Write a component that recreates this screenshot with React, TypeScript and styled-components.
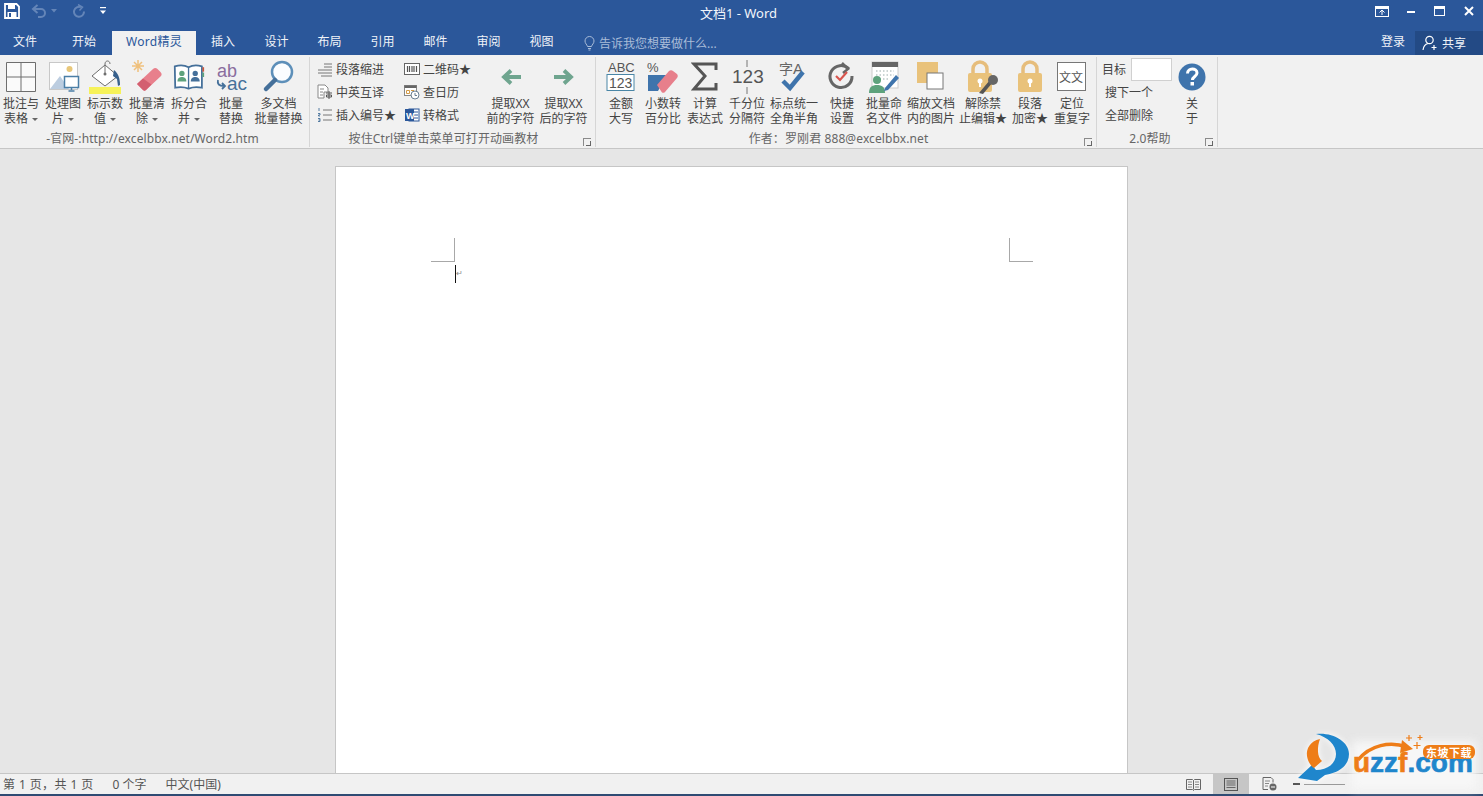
import React from "react";
import styled, { createGlobalStyle } from "styled-components";

const FONT = `"Noto Sans", "Noto Sans CJK SC", sans-serif`;

const Global = createGlobalStyle`
  html, body { margin: 0; padding: 0; height: 100%; overflow: hidden; }
  body { font-family: ${FONT}; font-size: 12px; color: #444; background: #e6e6e6; }
  * { box-sizing: border-box; }
`;

const Shell = styled.div`
  width: 1483px; height: 796px; display: flex; flex-direction: column; overflow: hidden; position: relative;
`;
const TitleBar = styled.div`
  height: 31px; flex: none; background: #2b579a; color: #fff;
  display: grid; grid-template-columns: 1fr auto 1fr; align-items: start;
`;
const Quick = styled.div`display: flex; align-items: center; height: 22px; padding-left: 3px;`;
const QuickBtn = styled.div<{ $w: number }>`
  width: ${p => p.$w}px; height: 20px; display: flex; align-items: center; justify-content: center;
`;
const Title = styled.div`font-size: 13px; line-height: 27px; color: #f2f5fa; padding-right: 6px;`;
const WinControls = styled.div`display: flex; justify-content: flex-end; height: 22px; padding-right: 0;`;
const WinBtn = styled.div`
  width: 29px; height: 22px; display: flex; align-items: center; justify-content: center;
`;
const TabBar = styled.div`
  height: 24px; flex: none; background: #2b579a; display: flex; align-items: stretch; color: #fff;
`;
const Tab = styled.div<{ $w: number; $active?: boolean; $pr?: number }>`
  width: ${p => p.$w}px; padding-right: ${p => p.$pr || 0}px; text-align: center; line-height: 22px; font-size: 12px;
  background: ${p => (p.$active ? "#f1f1f1" : "transparent")};
  color: ${p => (p.$active ? "#2b579a" : "#f0f3f8")};
  letter-spacing: ${p => (p.$active ? "0.3px" : "0")};
`;
const TellMe = styled.div`
  display: flex; align-items: center; gap: 4px; margin-left: 16px; color: #a9bcd8; height: 24px; font-size: 12px;
`;
const Spacer = styled.div`flex: 1;`;
const Login = styled.div`line-height: 22px; width: 44px; text-align: center; color: #f0f3f8;`;
const Share = styled.div`
  width: 68px; background: #234a85; display: flex; align-items: center; gap: 3px; padding-left: 7px; color: #f0f3f8; height: 24px;
`;
const Ribbon = styled.div`
  height: 94px; flex: none; background: #f1f1f1; border-bottom: 1px solid #c6c6c6; display: flex; position: relative;
`;
const Group = styled.div<{ $w: number; $bare?: boolean }>`
  width: ${p => p.$w}px; height: 90px; margin-top: 2px; display: flex; flex-direction: column; position: relative;
  border-right: ${p => (p.$bare ? "none" : "1px solid #d6d6d6")};
`;
const GroupBody = styled.div<{ $pl?: number }>`
  flex: 1; display: flex; align-items: flex-start; padding-left: ${p => p.$pl || 0}px; min-height: 0;
`;
const GroupFoot = styled.div<{ $pr?: number }>`
  height: 16px; text-align: center; line-height: 15px; color: #666; font-size: 12px; flex: none; padding-right: ${p => p.$pr || 0}px;
  letter-spacing: 0.1px; white-space: nowrap;
`;
const Launcher = styled.span`
  position: absolute; right: 4px; bottom: 1px; width: 8px; height: 8px; border-left: 1px solid #8a8a8a; border-top: 1px solid #8a8a8a;
  &::after { content: ""; position: absolute; right: 0; bottom: 0; width: 4px; height: 4px; border-right: 1px solid #666; border-bottom: 1px solid #666; }
`;
const Large = styled.div<{ $w: number }>`
  width: ${p => p.$w}px; flex: none; display: flex; flex-direction: column; align-items: center;
`;
const LargeIcon = styled.div`
  height: 36px; width: 100%; margin-top: 2px; display: flex; align-items: center; justify-content: center;
`;
const LargeLabel = styled.div`
  text-align: center; font-size: 12px; line-height: 15px; color: #444; white-space: nowrap; margin-top: 1px;
`;
const Caret = styled.span`
  display: inline-block; width: 0; height: 0; margin-left: 4px; vertical-align: 2px;
  border-left: 3px solid transparent; border-right: 3px solid transparent; border-top: 3px solid #666;
`;
const SmallCol = styled.div<{ $w: number }>`
  width: ${p => p.$w}px; flex: none; display: flex; flex-direction: column;
`;
const SmallRow = styled.div`
  height: 23px; display: flex; align-items: center; gap: 3px; white-space: nowrap; color: #444;
`;
const SmallIcon = styled.span`width: 16px; height: 16px; flex: none; display: flex; align-items: center; justify-content: center;`;
const SearchCol = styled.div`
  width: 76px; flex: none; padding-left: 5px; display: flex; flex-direction: column;
`;
const TargetRow = styled.div`display: flex; align-items: center; gap: 5px; height: 24px; white-space: nowrap;`;
const TargetBox = styled.div`width: 41px; height: 23px; flex: none; background: #fff; border: 1px solid #d0d0d0;`;
const SearchRow = styled.div`height: 23px; line-height: 23px; padding-left: 3px; white-space: nowrap;`;

const Main = styled.div`
  flex: 1; min-height: 0; background: #e6e6e6; padding: 17px 20px 0 0; display: flex; justify-content: center; overflow: hidden;
`;
const Page = styled.div`
  width: 793px; height: 640px; background: #fff; border: 1px solid #c6c6c6; padding: 71px 94px 0 95px; flex: none;
`;
const Marks = styled.div`display: flex; justify-content: space-between;`;
const Mark = styled.div<{ $right?: boolean }>`
  width: 24px; height: 24px; border-bottom: 1px solid #a8a8a8;
  border-right: ${p => (p.$right ? "none" : "1px solid #a8a8a8")};
  border-left: ${p => (p.$right ? "1px solid #a8a8a8" : "none")};
`;
const CaretRow = styled.div`display: flex; margin: 3px 0 0 24px; align-items: center;`;
const TextCaret = styled.div`width: 1px; height: 18px; background: #111;`;
const ParaMark = styled.span`font-size: 8px; color: #8a8a8a; line-height: 10px; margin-top: -3px;`;

const Status = styled.div`
  height: 21px; flex: none; background: #f1f1f1; border-top: 1px solid #c6c6c6; display: flex; align-items: center; color: #555; font-size: 12px; position: relative;
`;
const StatusItem = styled.span<{ $ml: number; $ls?: number }>`
  margin-left: ${p => p.$ml}px; white-space: nowrap; letter-spacing: ${p => p.$ls || 0}px;
`;
const ViewGroup = styled.div`display: flex; align-items: stretch; gap: 2px; height: 20px; margin-right: 138px;`;
const ViewBtn = styled.div<{ $w: number; $active?: boolean }>`
  width: ${p => p.$w}px; display: flex; align-items: center; justify-content: center;
  background: ${p => (p.$active ? "#c6c6c6" : "transparent")};
`;
const ZoomBar = styled.div`width: 56px; display: flex; align-items: center; gap: 4px; padding-left: 4px;`;
const ZoomMinus = styled.span`width: 7px; height: 2px; background: #555; flex: none;`;
const ZoomTrack = styled.span`flex: 1; height: 1px; background: #999;`;
const BottomLine = styled.div`height: 2px; flex: none; background: #2f4b73;`;

const Logo = styled.div`
  position: absolute; left: 1298px; top: 733px; width: 183px; height: 58px;
`;
const LogoHalo = styled.div`
  position: absolute; left: 54px; top: 8px; width: 124px; height: 48px; background: #f7f7f7; filter: blur(5px);
`;
const LogoText = styled.div`
  position: absolute; left: 55px; top: 26px; font: 700 28px/8px "Liberation Sans", sans-serif; letter-spacing: 0; color: #1f86cc; white-space: nowrap;
  -webkit-text-stroke: 0.6px currentColor;
`;
const LogoOrange = styled.span`color: #ee7d18;`;
const LogoBadge = styled.div`
  position: absolute; left: 125px; top: 12px; width: 52px; height: 14px; border-radius: 6px; background: #ee7d18; color: #fff;
  font: 700 11px/14px "Noto Sans CJK SC", sans-serif; text-align: center; letter-spacing: 0.5px; white-space: nowrap;
`;
const LogoMark = styled.svg<{ $glow?: boolean }>`
  position: absolute; left: 0; top: 0; overflow: visible;
  filter: ${p => (p.$glow ? "drop-shadow(0 0 3px #fff)" : "none")};
`;

/* ---------- icons ---------- */
type SP = { w?: number; h?: number; vb?: string; children: React.ReactNode };
const S = ({ w = 36, h = 36, vb, children }: SP) => (
  <svg width={w} height={h} viewBox={vb || `0 0 ${w} ${h}`} fill="none" style={{ display: "block" }}>{children}</svg>
);
const SaveIcon = () => (
  <S w={16} h={16}>
    <path d="M1 1h11.5L15 3.5V15H1z" stroke="#fff" strokeWidth="1.8" />
    <rect x="4" y="1.5" width="7" height="4.5" fill="#fff" />
    <rect x="3.5" y="9" width="9" height="5.5" fill="#fff" />
    <rect x="5" y="10" width="2" height="4" fill="#2b579a" />
  </S>
);
const UndoIcon = () => (
  <S w={16} h={14}>
    <path d="M3 5h7a4 4 0 0 1 0 8H7" stroke="#6485b8" strokeWidth="2" />
    <path d="M6.5 1 2 5l4.500 4" stroke="#6485b8" strokeWidth="2" />
  </S>
);
const RedoIcon = () => (
  <S w={14} h={14}>
    <path d="M9 3.200A5 5 0 1 0 12 7.500" stroke="#6485b8" strokeWidth="2" />
    <path d="M6 .5l4.500 2.700L7.500 6.500" stroke="#6485b8" strokeWidth="1.500" />
  </S>
);
const QuickMore = () => (
  <S w={6} h={8}>
    <rect x="0" y="0" width="6" height="1.200" fill="#fff" />
    <path d="M0 3.500h6L3 7z" fill="#fff" />
  </S>
);
const SmallDrop = () => (<S w={6} h={4}><path d="M0 0h6L3 3.500z" fill="#6485b8" /></S>);
const RibbonDisplay = () => (
  <S w={14} h={11}>
    <rect x=".5" y=".5" width="13" height="10" stroke="#fff" />
    <rect x="1" y="1" width="12" height="2" fill="#fff" />
    <path d="M4.500 6.500 7 4l2.500 2.500M7 4.500V9" stroke="#fff" />
  </S>
);
const MinIcon = () => <S w={10} h={10}><rect x="1" y="5" width="8" height="2" fill="#fff" /></S>;
const MaxIcon = () => (
  <S w={11} h={10}><rect x=".5" y=".5" width="10" height="9" stroke="#fff" /><rect x="1" y="1" width="9" height="2" fill="#fff" /></S>
);
const CloseIcon = () => (
  <S w={10} h={10}><path d="M1 1l8 8M9 1l-8 8" stroke="#fff" strokeWidth="2" /></S>
);
const BulbIcon = () => (
  <S w={11} h={15}>
    <path d="M3.500 10.500C3 8.500 1 7.500 1 5a4.500 4.500 0 0 1 9 0c0 2.500-2 3.500-2.500 5.500z" stroke="#a9bcd8" />
    <path d="M4 12.500h3M4.500 14h2" stroke="#a9bcd8" />
  </S>
);
const UserPlus = () => (
  <S w={17} h={16}>
    <circle cx="7.500" cy="5" r="3.700" stroke="#fff" strokeWidth="1.200" />
    <path d="M1 15c.5-4 2.500-6 5-6.500" stroke="#fff" strokeWidth="1.200" />
    <path d="M12 10v5M9.500 12.500h5" stroke="#fff" strokeWidth="1.200" />
  </S>
);
const TableIcon = () => (
  <S><path d="M3.500 3.500h29v29h-29zM18 3.500v29M3.500 18h29" stroke="#6e6e6e" fill="#fafafa" /></S>
);
const PictureIcon = () => (
  <S>
    <rect x="4.500" y="3.500" width="28" height="27" fill="#fff" stroke="#c8c8c8" />
    <circle cx="24.500" cy="10" r="3" fill="#e8c77a" />
    <path d="M5 30 15 17l9 13z" fill="#bccde0" />
    <rect x="19.500" y="17.500" width="14" height="11" fill="#fff" stroke="#4a7ea6" strokeWidth="1.500" />
    <path d="M26.500 29v2M23.500 32h6" stroke="#4a7ea6" strokeWidth="1.500" />
  </S>
);
const BucketIcon = () => (
  <S>
    <rect x="2" y="28" width="32" height="7" fill="#f6f25a" />
    <path d="M5 17 18 6l13 11-13 10z" fill="#fff" stroke="#6e6e6e" />
    <path d="M18 15V5c0-4 5-4 5 0" stroke="#6e6e6e" />
    <circle cx="18" cy="15" r="1.500" fill="#6e6e6e" />
    <path d="M27 11c4 3 6 8 6 15l-2 1-1-7-4-3z" fill="#37608c" />
  </S>
);
const EraserIcon = () => (
  <S>
    <path d="M8 25 24 10c1.500-1.500 3-1.500 4.500 0l3 3c1.500 1.500 1.500 3 0 4.500L17 31c-1 1-2 1-3 0l-6-6z" fill="#e8808c" />
    <path d="M8 25l6-5.500 8.500 6L17 31c-1 1-2 1-3 0z" fill="#d35f70" />
    <path d="M9 1v12M3 7h12M5 3l8 8M13 3l-8 8" stroke="#efc07c" strokeWidth="1.500" />
  </S>
);
const BookIcon = () => (
  <S w={32} h={32} vb="0 0 36 36">
    <path d="M2 6c5-1.500 11-1.500 15.500 1 4.500-2.500 10-2.500 15 -1v24c-5-1-10-1-15 1-5-2-10-2-15-1z" fill="#fff" stroke="#45709a" strokeWidth="2" />
    <path d="M17.500 7v24" stroke="#45709a" strokeWidth="1.500" />
    <circle cx="10" cy="14" r="3" fill="#5da27c" />
    <path d="M5 23c0-4 2.500-5 5-5s5 1 5 5z" fill="#5da27c" />
    <circle cx="25" cy="14" r="3" fill="#45709a" />
    <path d="M20 23c0-4 2.500-5 5-5s5 1 5 5z" fill="#45709a" />
    <rect x="33" y="7" width="2" height="5" fill="#c7573e" />
    <rect x="33" y="13" width="2" height="5" fill="#5da27c" />
  </S>
);
const IconText = styled.text<{ $s: number; $c: string; $w?: number }>`
  font-family: "Liberation Sans", sans-serif; font-size: ${p => p.$s}px; fill: ${p => p.$c}; font-weight: ${p => p.$w || 400};
`;
const AbAcIcon = () => (
  <S>
    <IconText x="4" y="18" $s={18} $c="#8a6d9e">ab</IconText>
    <IconText x="14" y="31" $s={19} $c="#45709a">ac</IconText>
    <path d="M5 21c-1 4 1 6 6 6M9 24l3 3-3 3" stroke="#45709a" strokeWidth="1.800" />
  </S>
);
const MagnifierIcon = () => (
  <S>
    <circle cx="21" cy="13" r="10" stroke="#5d8fb9" strokeWidth="2.500" fill="#fbfdff" />
    <path d="M14 21 5 30" stroke="#45709a" strokeWidth="4.500" strokeLinecap="round" />
  </S>
);
const ArrowIcon = ({ right }: { right?: boolean }) => (
  <S w={22} h={18}>
    <g transform={right ? "" : "matrix(-1 0 0 1 22 0)"}>
      <path d="M1 9h17M11 2.500l7 6.500-7 6.500" stroke="#6fa58f" strokeWidth="3.800" />
    </g>
  </S>
);
const IndentIcon = () => (
  <S w={16} h={16}>
    <path d="M7 3h8M7 6h8M1 9h14M1 12h14M4 15h11" stroke="#777" />
  </S>
);
const TranslateIcon = () => (
  <S w={16} h={16}>
    <path d="M1 1h7l3 3v4H7v6H1z" fill="#fff" stroke="#888" />
    <path d="M3 5h4M3 8h3M3 11h3" stroke="#888" />
    <path d="M9 9h6M12 7v8M9.500 11h5v2h-5z" stroke="#555" />
  </S>
);
const NumListIcon = () => (
  <S w={16} h={16}>
    <path d="M6 3h9M6 8h9M6 13h9" stroke="#777" />
    <path d="M2 1v3M1 6.500h2v1.500H1.500V9H3M1 11.500h2v3H1M1.500 13H3" stroke="#45709a" strokeWidth=".9" />
  </S>
);
const BarcodeIcon = () => (
  <S w={16} h={14}>
    <rect x=".5" y="1.500" width="15" height="11" fill="#fff" stroke="#666" />
    <path d="M3.500 4v6M5.500 4v6M8 4v6M10 4v6M12.500 4v6" stroke="#555" strokeWidth="1.200" />
  </S>
);
const CalendarIcon = () => (
  <S w={16} h={16}>
    <rect x=".5" y="1.500" width="12" height="10" fill="#fff" stroke="#888" />
    <rect x=".5" y="1.500" width="12" height="2.500" fill="#666" />
    <path d="M2.500 6.500h3v3h-3zM7 6.500h3" stroke="#d39a46" />
    <circle cx="11" cy="11" r="4" fill="#fff" stroke="#6a7f92" />
    <path d="M11 9v2.500h2" stroke="#6a7f92" />
  </S>
);
const WordIcon = () => (
  <S w={16} h={16}>
    <rect x="5" y="2" width="10" height="12" fill="#fff" stroke="#2b579a" />
    <path d="M10 5h4M10 8h4M10 11h4" stroke="#2b579a" />
    <rect x="1" y="2" width="9" height="12" fill="#2b579a" />
    <IconText x="2" y="11.500" $s={9} $c="#fff" $w={700}>W</IconText>
  </S>
);
const Abc123Icon = () => (
  <S w={30} h={32}>
    <IconText x="2" y="11" $s={13} $c="#555">ABC</IconText>
    <rect x="1" y="13.500" width="27" height="16" fill="#fff" stroke="#4a86a6" />
    <IconText x="3" y="26.500" $s={14} $c="#555">123</IconText>
  </S>
);
const PercentEraser = () => (
  <S w={34} h={34}>
    <IconText x="1" y="12" $s={13} $c="#555">%</IconText>
    <path d="M2 15h19l-9 16H2z" fill="#3f74ac" />
    <path d="M11 25 23 11c1-1 3-1 4 0l4 3c1 1 1 3 0 4L19 32c-1 1-2 1-3 .5z" fill="#e77f8b" />
  </S>
);
const SigmaIcon = () => (
  <S w={28} h={30}>
    <path d="M25 8V2H3l11 12L3 27h22v-6" stroke="#555" strokeWidth="3" />
  </S>
);
const Num123Icon = () => (
  <S w={34} h={36}>
    <path d="M17 1v7M17 28v7" stroke="#777" />
    <IconText x="2" y="24" $s={19} $c="#555">123</IconText>
  </S>
);
const ZiCheck = () => (
  <S w={34} h={36}>
    <text x="2" y="15" fontFamily='"Noto Sans CJK SC", sans-serif' fontSize="14" fill="#666">字</text>
    <IconText x="16" y="15" $s={15} $c="#666">A</IconText>
    <path d="M6 22l7 7L26 13" stroke="#3f74ac" strokeWidth="4.500" />
  </S>
);
const QuickSetIcon = () => (
  <S w={30} h={30}>
    <path d="M22 7a11 11 0 1 0 3 7" stroke="#666" strokeWidth="3" />
    <path d="M15 1l6 6-5 4" stroke="#666" strokeWidth="2.500" />
    <path d="M9 14l4 4 7-8" stroke="#d8554e" strokeWidth="2.200" />
  </S>
);
const RenameIcon = () => (
  <S w={34} h={34}>
    <rect x="5" y="2" width="26" height="26" fill="#fff" stroke="#ccc" />
    <rect x="5" y="2" width="26" height="5" fill="#666" />
    <path d="M9 11h18M9 15h18M9 19h14" stroke="#9aa" strokeDasharray="1.500 2" />
    <circle cx="10" cy="20" r="4" fill="#5da27c" />
    <path d="M2 33c0-6 3-8 8-8s8 2 8 8z" fill="#5da27c" />
    <path d="M18 28 29 15l3 3-11 12-4 1z" fill="#3f74ac" />
  </S>
);
const ResizeIcon = () => (
  <S w={30} h={32}>
    <rect x="1" y="1" width="21" height="21" fill="#e9c27b" />
    <rect x="11" y="12" width="16" height="16" fill="#fff" stroke="#777" />
  </S>
);
const LockShape = () => (
  <>
    <path d="M8 14V9a7 7 0 0 1 14 0v5" stroke="#e6bd7c" strokeWidth="3.500" />
    <rect x="3" y="13" width="24" height="19" rx="2" fill="#e9c27b" />
    <circle cx="15" cy="21" r="2.500" fill="#fff" />
    <rect x="14" y="21" width="2" height="6" fill="#fff" />
  </>
);
const LockKeyIcon = () => (
  <S w={36} h={34}>
    <LockShape />
    <path d="M14 33l11-13 3 2-10 12z" fill="#555" />
    <circle cx="28" cy="20" r="5" fill="#666" />
  </S>
);
const LockIcon = () => <S w={30} h={34}><LockShape /></S>;
const WenIcon = () => (
  <S w={30} h={30}>
    <rect x=".5" y=".5" width="28" height="28" fill="#fff" stroke="#777" />
    <text x="2" y="20" fontFamily='"Noto Sans CJK SC", sans-serif' fontSize="12" fill="#555">文文</text>
  </S>
);
const HelpIcon = () => (
  <S w={28} h={28}>
    <circle cx="14" cy="14" r="13.500" fill="#3f74ac" />
    <path d="M9.500 10.500c0-6 9.500-6 9.500 -.5 0 3.500-4.500 3.500-4.500 7" stroke="#fff" strokeWidth="3" />
    <rect x="12.500" y="19" width="3.500" height="3.500" fill="#fff" />
  </S>
);
const ReadIcon = () => (
  <S w={15} h={13}>
    <path d="M.5 1.500h6l1 1 1-1h6v10h-6l-1 1-1-1h-6zM7.500 2.500v9" stroke="#666" />
    <path d="M2 4h4M2 6.500h4M2 9h4M9 4h4M9 6.500h4M9 9h4" stroke="#888" />
  </S>
);
const PrintIcon = () => (
  <S w={14} h={13}>
    <rect x=".5" y=".5" width="13" height="12" stroke="#555" />
    <path d="M2.500 3h9M2.500 5h9M2.500 7h9M2.500 9.500h9" stroke="#666" />
  </S>
);
const WebIcon = () => (
  <S w={15} h={14}>
    <path d="M1 .5h8l2 2v3M1 .5v12h5" stroke="#666" />
    <path d="M3 4h5M3 6.500h4M3 9h3" stroke="#888" />
    <circle cx="11" cy="10" r="3.500" fill="#666" />
    <path d="M9 10h4" stroke="#fff" />
  </S>
);
const LogoSwirl = () => (
  <LogoMark $glow width="54" height="50" viewBox="0 0 54 50">
    <path d="M18 1C34-1 51 8 51 21c0 12-11 19-24 21l-8 6L0 45l14-13 4 5c12 0 20-7 20-16 0-9-8-17-20-20z" fill="#1f86cc" />
    <path d="M22 6C12 8 8 16 9 23c1 6 4 10 7 12l8-7c-5-4-5-14-2-22z" fill="#ee7d18" />
  </LogoMark>
);
const LogoSpark = () => (
  <LogoMark width="183" height="58" viewBox="0 0 183 58">
    <path d="M60 27C72 12 92 8 109 14" stroke="#ee7d18" strokeWidth="3.500" fill="none" />
    <path d="M104 7l11 9-13 4z" fill="#ee7d18" />
    <path d="M119 9v7M115.500 12.500h7M111 2v6M108 5h6M122 2v5M119.500 4.500h5" stroke="#ee7d18" strokeWidth="1.200" />
  </LogoMark>
);

/* ---------- data ---------- */
type LargeItem = { w: number; lines: string[]; icon: React.ReactNode; caret?: boolean };

const G1: LargeItem[] = [
  { w: 42, lines: ["批注与", "表格"], icon: <TableIcon />, caret: true },
  { w: 42, lines: ["处理图", "片"], icon: <PictureIcon />, caret: true },
  { w: 42, lines: ["标示数", "值"], icon: <BucketIcon />, caret: true },
  { w: 42, lines: ["批量清", "除"], icon: <EraserIcon />, caret: true },
  { w: 42, lines: ["拆分合", "并"], icon: <BookIcon />, caret: true },
  { w: 42, lines: ["批量", "替换"], icon: <AbAcIcon /> },
  { w: 53, lines: ["多文档", "批量替换"], icon: <MagnifierIcon /> },
];
const G2L: LargeItem[] = [
  { w: 53, lines: ["提取XX", "前的字符"], icon: <ArrowIcon /> },
  { w: 53, lines: ["提取XX", "后的字符"], icon: <ArrowIcon right /> },
];
const G3: LargeItem[] = [
  { w: 42, lines: ["金额", "大写"], icon: <Abc123Icon /> },
  { w: 42, lines: ["小数转", "百分比"], icon: <PercentEraser /> },
  { w: 42, lines: ["计算", "表达式"], icon: <SigmaIcon /> },
  { w: 42, lines: ["千分位", "分隔符"], icon: <Num123Icon /> },
  { w: 52, lines: ["标点统一", "全角半角"], icon: <ZiCheck /> },
  { w: 44, lines: ["快捷", "设置"], icon: <QuickSetIcon /> },
  { w: 40, lines: ["批量命", "名文件"], icon: <RenameIcon /> },
  { w: 54, lines: ["缩放文档", "内的图片"], icon: <ResizeIcon /> },
  { w: 50, lines: ["解除禁", "止编辑★"], icon: <LockKeyIcon /> },
  { w: 44, lines: ["段落", "加密★"], icon: <LockIcon /> },
  { w: 40, lines: ["定位", "重复字"], icon: <WenIcon /> },
];
const SC1: [string, React.ReactNode][] = [
  ["段落缩进", <IndentIcon />],
  ["中英互译", <TranslateIcon />],
  ["插入编号★", <NumListIcon />],
];
const SC2: [string, React.ReactNode][] = [
  ["二维码★", <BarcodeIcon />],
  ["查日历", <CalendarIcon />],
  ["转格式", <WordIcon />],
];
const TABS: { t: string; w: number; pr?: number; active?: boolean }[] = [
  { t: "文件", w: 56, pr: 6 },
  { t: "开始", w: 56 },
  { t: "Word精灵", w: 84, active: true },
  { t: "插入", w: 54 },
  { t: "设计", w: 53 },
  { t: "布局", w: 53 },
  { t: "引用", w: 53 },
  { t: "邮件", w: 53 },
  { t: "审阅", w: 53 },
  { t: "视图", w: 53 },
];

const LargeBtn = ({ item }: { item: LargeItem }) => (
  <Large $w={item.w}>
    <LargeIcon>{item.icon}</LargeIcon>
    <LargeLabel>
      {item.lines[0]}
      <br />
      {item.lines[1]}
      {item.caret && <Caret />}
    </LargeLabel>
  </Large>
);

export default function App() {
  return (
    <Shell>
      <Global />
      <TitleBar>
        <Quick>
          <QuickBtn $w={18}><SaveIcon /></QuickBtn>
          <QuickBtn $w={10} />
          <QuickBtn $w={16}><UndoIcon /></QuickBtn>
          <QuickBtn $w={14}><SmallDrop /></QuickBtn>
          <QuickBtn $w={10} />
          <QuickBtn $w={16}><RedoIcon /></QuickBtn>
          <QuickBtn $w={11} />
          <QuickBtn $w={10}><QuickMore /></QuickBtn>
        </Quick>
        <Title>文档1 - Word</Title>
        <WinControls>
          <WinBtn><RibbonDisplay /></WinBtn>
          <WinBtn><MinIcon /></WinBtn>
          <WinBtn><MaxIcon /></WinBtn>
          <WinBtn><CloseIcon /></WinBtn>
        </WinControls>
      </TitleBar>
      <TabBar>
        {TABS.map(t => (
          <Tab key={t.t} $w={t.w} $pr={t.pr} $active={t.active}>{t.t}</Tab>
        ))}
        <TellMe><BulbIcon />告诉我您想要做什么...</TellMe>
        <Spacer />
        <Login>登录</Login>
        <Share><UserPlus />共享</Share>
      </TabBar>
      <Ribbon>
        <Group $w={310}>
          <GroupBody>{G1.map(i => <LargeBtn key={i.lines.join()} item={i} />)}</GroupBody>
          <GroupFoot $pr={4}>-官网-:http://excelbbx.net/Word2.htm</GroupFoot>
        </Group>
        <Group $w={286}>
          <GroupBody $pl={7}>
            <SmallCol $w={87}>{SC1.map(([t, ic]) => <SmallRow key={t}><SmallIcon>{ic}</SmallIcon>{t}</SmallRow>)}</SmallCol>
            <SmallCol $w={80}>{SC2.map(([t, ic]) => <SmallRow key={t}><SmallIcon>{ic}</SmallIcon>{t}</SmallRow>)}</SmallCol>
            {G2L.map(i => <LargeBtn key={i.lines.join()} item={i} />)}
          </GroupBody>
          <GroupFoot $pr={18}>按住Ctrl键单击菜单可打开动画教材</GroupFoot>
          <Launcher />
        </Group>
        <Group $w={501}>
          <GroupBody $pl={4}>{G3.map(i => <LargeBtn key={i.lines.join()} item={i} />)}</GroupBody>
          <GroupFoot $pr={15}>作者：罗刚君 888@excelbbx.net</GroupFoot>
          <Launcher />
        </Group>
        <Group $w={121}>
          <GroupBody>
            <SearchCol>
              <TargetRow>目标<TargetBox /></TargetRow>
              <SearchRow>搜下一个</SearchRow>
              <SearchRow>全部删除</SearchRow>
            </SearchCol>
            <LargeBtn item={{ w: 38, lines: ["关", "于"], icon: <HelpIcon /> }} />
          </GroupBody>
          <GroupFoot $pr={14}>2.0帮助</GroupFoot>
          <Launcher />
        </Group>
      </Ribbon>
      <Main>
        <Page>
          <Marks>
            <Mark />
            <Mark $right />
          </Marks>
          <CaretRow><TextCaret /><ParaMark>↵</ParaMark></CaretRow>
        </Page>
      </Main>
      <Status>
        <StatusItem $ml={3} $ls={0.4}>第 1 页，共 1 页</StatusItem>
        <StatusItem $ml={19}>0 个字</StatusItem>
        <StatusItem $ml={19}>中文(中国)</StatusItem>
        <Spacer />
        <ViewGroup>
          <ViewBtn $w={36}><ReadIcon /></ViewBtn>
          <ViewBtn $w={36} $active><PrintIcon /></ViewBtn>
          <ViewBtn $w={36}><WebIcon /></ViewBtn>
          <ZoomBar><ZoomMinus /><ZoomTrack /></ZoomBar>
        </ViewGroup>
      </Status>
      <BottomLine />
      <Logo>
        <LogoHalo />
        <LogoSwirl />
        <LogoSpark />
        <LogoText><LogoOrange>u</LogoOrange>zz<LogoOrange>f</LogoOrange>.com</LogoText>
        <LogoBadge>东坡下载</LogoBadge>
      </Logo>
    </Shell>
  );
}
